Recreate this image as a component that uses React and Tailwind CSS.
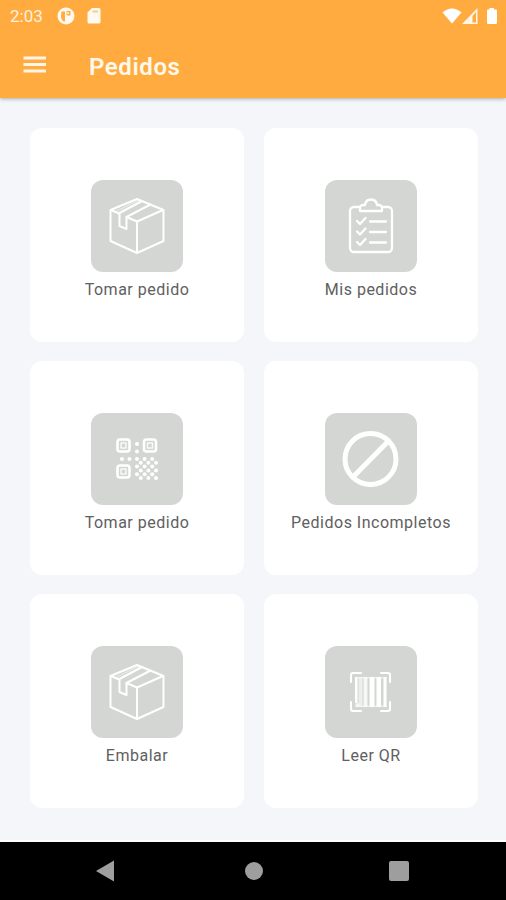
function TileIcon({ children }) {
  return (
    <span className="block size-[92px] rounded-xl bg-[#d3d6d2]">
      <svg viewBox="0 0 92 92" className="size-full" fill="none" stroke="#fff" strokeWidth="2" strokeLinecap="round" strokeLinejoin="round" aria-hidden="true">
        {children}
      </svg>
    </span>
  );
}

function BoxIcon() {
  return (
    <TileIcon>
      <path d="M46 19 L72.500 30 V61 L46 73 L19.500 61 V30 Z" />
      <path d="M20 30 L28 33.5 M35.5 37 L46 41.5 L72 30 M46 41.5 V72" />
      <path d="M51 21 L28.5 33 V46 L35.5 49 V37 L59.5 24.5" />
      <path d="M24 32 L48 20" strokeWidth="1" opacity=".6" />
    </TileIcon>
  );
}

function ClipboardIcon() {
  return (
    <TileIcon>
      <g transform="translate(-1 0)" strokeWidth="2.300">
        <path d="M36 27 H30 a4 4 0 0 0 -4 4 V68 a4 4 0 0 0 4 4 H64 a4 4 0 0 0 4 -4 V31 a4 4 0 0 0 -4 -4 H58" />
        <path d="M36 31 V28 a3 3 0 0 1 3 -3 H41 C41.500 21.500 43.500 19.500 47 19.500 C50.500 19.500 52.500 21.500 53 25 H55 a3 3 0 0 1 3 3 V31 Z" />
        <path d="M33 41 L36 44 L41.500 38 M33 51.500 L36 54.500 L41.500 48.500 M33 62 L36 65 L41.500 59" />
        <path d="M46 41.500 H62 M46 52 H62 M46 62.500 H62" />
      </g>
    </TileIcon>
  );
}

const qrDots = [[46, 31], [46, 38.5], [31, 46], [38.5, 46]];
for (let row = 0; row < 6; row++) {
  for (let col = 0; col < 6; col++) {
    if ((row + col) % 2 === 0) qrDots.push([46 + col * 3.8, 46 + row * 3.8]);
  }
}

function QrIcon() {
  return (
    <TileIcon>
      {[[25, 25], [51.5, 25], [25, 51]].map(([x, y]) => (
        <g key={`${x}-${y}`}>
          <rect x={x + 1.5} y={y + 1.5} width="12" height="12" rx="2.5" strokeWidth="2.600" />
          <rect x={x + 5} y={y + 5} width="5" height="5" strokeWidth="1.500" opacity=".85" />
        </g>
      ))}
      {qrDots.map(([x, y]) => (
        <circle key={`${x}-${y}`} cx={x} cy={y} r="2" fill="#fff" stroke="none" />
      ))}
    </TileIcon>
  );
}

function BanIcon() {
  return (
    <TileIcon>
      <g strokeWidth="5">
        <circle cx="45.500" cy="46" r="25.500" />
        <path d="M28 64 L63.500 28" />
      </g>
    </TileIcon>
  );
}

function BarcodeIcon() {
  return (
    <TileIcon>
      <path d="M26 36 V29 a2 2 0 0 1 2 -2 H36 M56 27 H63 a2 2 0 0 1 2 2 V36 M65 56 V63 a2 2 0 0 1 -2 2 H56 M36 65 H28 a2 2 0 0 1 -2 -2 V56" />
      <g fill="#fff" stroke="none">
        <rect x="30" y="31" width="2.500" height="26" />
        <rect x="33.500" y="31" width="4" height="30" opacity=".6" />
        <rect x="38.500" y="31" width="4" height="30" opacity=".8" />
        <rect x="44.500" y="31" width="5" height="30" />
        <rect x="51.500" y="31" width="4.500" height="30" />
        <rect x="58.500" y="31" width="3" height="30" />
        <path d="M30 31 H61.500 V32.500 H30 Z M30 59.500 H61.500 V61 H30 Z" opacity=".5" />
        <circle cx="32.500" cy="59" r="2" opacity=".7" />
      </g>
    </TileIcon>
  );
}

const cards = [
  { label: "Tomar pedido", Icon: BoxIcon },
  { label: "Mis pedidos", Icon: ClipboardIcon },
  { label: "Tomar pedido", Icon: QrIcon },
  { label: "Pedidos Incompletos", Icon: BanIcon },
  { label: "Embalar", Icon: BoxIcon },
  { label: "Leer QR", Icon: BarcodeIcon },
];

function StatusBar() {
  return (
    <div className="flex h-8 items-center justify-between pl-[10px] pr-2">
      <div className="flex items-center">
        <span className="w-[47px] text-[17px] leading-5 text-[#fff1dc]">2:03</span>
        <svg viewBox="0 0 18 18" className="size-[18px]" aria-hidden="true">
          <circle cx="9" cy="9" r="8.500" fill="#fffaf0" />
          <path d="M4.500 4.500 H8 V14.500 H6.500 C5 13.500 4 11.500 4 9 Z" fill="#ffab40" />
          <path d="M9.500 4 H13.500 V8.500 H10.500 L9.500 7.500 Z" fill="#ffab40" />
          <circle cx="11" cy="6" r="1" fill="#fffaf0" />
        </svg>
        <svg viewBox="0 0 14 16" className="ml-3 h-4 w-[14px]" aria-hidden="true">
          <path d="M5 0 H12 a1.500 1.500 0 0 1 1.500 1.500 V14 a1.500 1.500 0 0 1 -1.500 1.500 H2 A1.500 1.500 0 0 1 .5 14 V4.500 Z" fill="#fffaf0" />
          <path d="M5.500 3.500 H11" stroke="#ffc987" strokeWidth="2" />
        </svg>
      </div>
      <div className="flex items-center">
        <svg viewBox="0 0 20 16" className="h-4 w-5" aria-hidden="true">
          <path d="M0.500 4.500 Q10 -3.500 19.500 4.500 L10 15.500 Z" fill="#fff" />
        </svg>
        <svg viewBox="0 0 16 16" className="h-4 w-4" aria-hidden="true">
          <path d="M15.500 0 V16 H0 Z M14 4 L10.500 8 V14.500 H14 Z" fill="#fff6e8" fillRule="evenodd" />
        </svg>
        <svg viewBox="0 0 12 16" className="ml-2 h-4 w-3" aria-hidden="true">
          <path d="M3.500 0 H8 V1.500 H10 a1 1 0 0 1 1 1 V15 a1 1 0 0 1 -1 1 H2 a1 1 0 0 1 -1 -1 V2.500 a1 1 0 0 1 1 -1 H3.500 Z" fill="#fff" />
        </svg>
      </div>
    </div>
  );
}

export default function App() {
  return (
    <div className="flex min-h-screen flex-col bg-[#f4f6fa] font-[Roboto,sans-serif]">
      <header className="relative bg-[#ffab40] shadow-[0_1px_4px_rgba(0,0,0,0.3)]">
        <StatusBar />
        <div className="flex h-[66px] items-center pl-[23px]">
          <button type="button" aria-label="Abrir menú" className="flex size-6 items-center">
            <svg viewBox="0 0 24 24" className="size-6" aria-hidden="true">
              <path d="M0.500 5 H23 M0.500 11.500 H23 M0.500 18 H23" stroke="#fff6e8" strokeWidth="2.800" />
            </svg>
          </button>
          <h1 className="ml-[42px] pt-1 text-2xl font-semibold tracking-wide text-[#fff8ec]">Pedidos</h1>
        </div>
      </header>
      <main className="grow pb-8 pl-[30px] pr-7 pt-[30px]">
        <div className="grid grid-cols-2 gap-x-5 gap-y-[19px]">
          {cards.map(({ label, Icon }, i) => (
            <button key={i} type="button" className="flex aspect-square flex-col items-center rounded-xl bg-white pt-[52px]">
              <Icon />
              <span className="mt-2 text-base leading-5 tracking-[0.5px] text-[#606060]">{label}</span>
            </button>
          ))}
        </div>
      </main>
      <nav aria-label="Sistema" className="flex h-[60px] items-center justify-between border-t-2 border-white bg-black pl-[95px] pr-[97px]">
        <button type="button" aria-label="Atrás" className="flex size-6 items-center">
          <svg viewBox="0 0 24 24" className="size-6" aria-hidden="true"><path d="M1 12 L19 1.500 V22.500 Z" fill="#9e9e9e" /></svg>
        </button>
        <button type="button" aria-label="Inicio" className="size-[18px] rounded-full bg-[#9e9e9e]" />
        <button type="button" aria-label="Recientes" className="size-5 rounded-xs bg-[#9e9e9e]" />
      </nav>
    </div>
  );
}
